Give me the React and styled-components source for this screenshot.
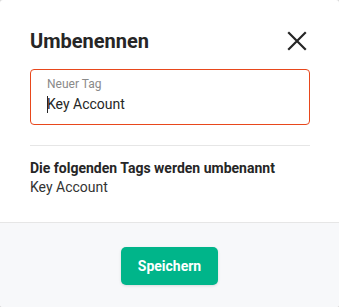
import React from 'react';
import styled, { createGlobalStyle } from 'styled-components';

const GlobalStyle = createGlobalStyle`
  html, body {
    margin: 0;
    padding: 0;
    background: #d9d9d9;
  }
  body {
    font-family: Roboto, "Noto Sans", Arial, sans-serif;
  }
`

const Modal = styled.div`
  width: 339px;
  height: 307px;
  background: #ffffff;
  border-radius: 3px;
  overflow: hidden;
  display: flex;
  flex-direction: column;
`

const Body = styled.div`
  padding: 28px 29px 0 30px;
  height: 222px;
  box-sizing: border-box;
`

const Header = styled.div`
  display: flex;
  align-items: center;
  justify-content: space-between;
  height: 26px;
  margin-bottom: 15px;
`

const Title = styled.h2`
  margin: 0;
  font-size: 20px;
  font-weight: 700;
  color: #262626;
`

const CloseButton = styled.button`
  border: none;
  background: none;
  padding: 0;
  width: 24px;
  height: 24px;
  display: flex;
  align-items: center;
  justify-content: center;
  cursor: pointer;
  margin-right: 1px;
`

const Field = styled.div`
  border: 1px solid #e8471c;
  border-radius: 4px;
  height: 56px;
  box-sizing: border-box;
  padding: 7px 16px 0 16px;
`

const Label = styled.div`
  font-size: 12px;
  color: #8a8a8a;
  line-height: 15px;
`

const Value = styled.div`
  font-size: 14px;
  color: #262626;
  line-height: 22px;
  margin-top: 1px;

  &::before {
    content: '';
    display: inline-block;
    width: 1px;
    height: 17px;
    margin-right: -1px;
    vertical-align: -4px;
    background: #262626;
  }
`

const Divider = styled.hr`
  border: none;
  border-top: 1px solid #e6e6e6;
  margin: 20px 0 13px;
`

const InfoTitle = styled.div`
  font-size: 14px;
  font-weight: 700;
  color: #262626;
  line-height: 19px;
`

const InfoText = styled.div`
  font-size: 14px;
  color: #333333;
  line-height: 19px;
`

const Footer = styled.div`
  flex: 1;
  background: #f7f8fa;
  border-top: 1px solid #e6e6e6;
  display: flex;
  justify-content: center;
  padding-top: 24px;
  box-sizing: border-box;
`

const SaveButton = styled.button`
  width: 97px;
  height: 38px;
  border: none;
  border-radius: 5px;
  background: #00b58a;
  color: #ffffff;
  font-family: Roboto, Arial, sans-serif;
  font-size: 14px;
  font-weight: 700;
  box-shadow: 0 1px 3px rgba(0, 0, 0, 0.12);
  cursor: pointer;
`

export default function App() {
  return (
    <>
      <GlobalStyle />
      <Modal>
        <Body>
          <Header>
            <Title>Umbenennen</Title>
            <CloseButton aria-label="Schließen">
              <svg width="20" height="20" viewBox="0 0 20 20">
                <path d="M2 2 L18 18 M18 2 L2 18" stroke="#262626" strokeWidth="2.2" strokeLinecap="square" />
              </svg>
            </CloseButton>
          </Header>
          <Field>
            <Label>Neuer Tag</Label>
            <Value>Key Account</Value>
          </Field>
          <Divider />
          <InfoTitle>Die folgenden Tags werden umbenannt</InfoTitle>
          <InfoText>Key Account</InfoText>
        </Body>
        <Footer>
          <SaveButton>Speichern</SaveButton>
        </Footer>
      </Modal>
    </>
  );
}
